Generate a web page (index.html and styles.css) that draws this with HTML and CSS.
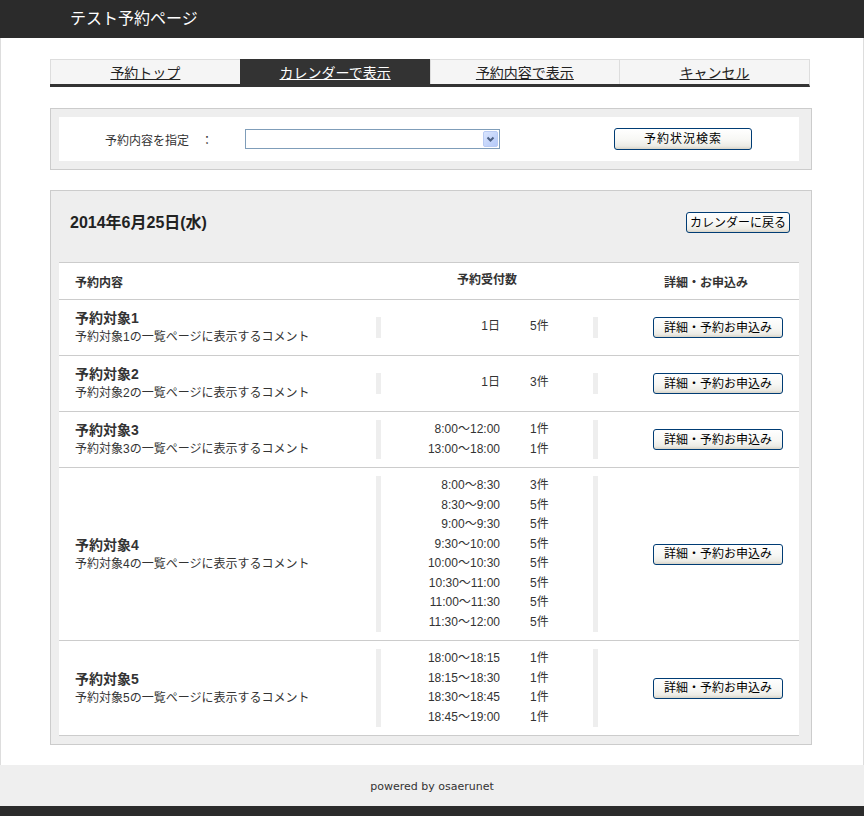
FILE: index.html
```html
<!DOCTYPE html>
<html lang="ja">
<head>
<meta charset="utf-8">
<title>テスト予約ページ</title>
<link rel="stylesheet" href="styles.css">
</head>
<body>
<header class="site-header"><h1 class="site-title">テスト予約ページ</h1></header>
<div class="page">
  <nav class="tabs">
    <a class="tab" href="#">予約トップ</a>
    <a class="tab active" href="#">カレンダーで表示</a>
    <a class="tab" href="#">予約内容で表示</a>
    <a class="tab" href="#">キャンセル</a>
  </nav>

  <section class="box search">
    <div class="search-inner">
      <label class="search-label">予約内容を指定　：</label>
      <span class="select-wrap">
        <select class="select"><option></option></select>
        <span class="select-arrow"><svg width="15" height="16" viewBox="0 0 15 16"><defs><linearGradient id="ag" x1="0" y1="0" x2="1" y2="1"><stop offset="0" stop-color="#dbe6fe"/><stop offset="1" stop-color="#b3c8f8"/></linearGradient></defs><rect x="0.5" y="0.5" width="14" height="15" rx="1.5" fill="url(#ag)" stroke="#b9cbf3"/><path d="M4.5 6.5 L7.5 9.5 L10.5 6.5" fill="none" stroke="#4d6185" stroke-width="2"/></svg></span>
      </span>
      <button class="btn btn-search" type="button">予約状況検索</button>
    </div>
  </section>

  <section class="box result">
    <div class="result-head">
      <h2 class="result-title">2014年6月25日(水)</h2>
      <button class="btn btn-back" type="button">カレンダーに戻る</button>
    </div>
    <div class="table">
      <div class="row thead">
        <div class="c1">予約内容</div>
        <div class="group">
          <div class="c2 h2c">予約受付数</div>
          <div class="c3 h3c">詳細・お申込み</div>
        </div>
      </div>

      <div class="row">
        <div class="c1"><div class="item-title">予約対象1</div><div class="item-note">予約対象1の一覧ページに表示するコメント</div></div>
        <div class="group">
          <div class="c2"><div class="slot"><span class="time">1日</span><span>5件</span></div></div>
          <div class="c3"><button class="btn btn-apply" type="button">詳細・予約お申込み</button></div>
        </div>
      </div>

      <div class="row">
        <div class="c1"><div class="item-title">予約対象2</div><div class="item-note">予約対象2の一覧ページに表示するコメント</div></div>
        <div class="group">
          <div class="c2"><div class="slot"><span class="time">1日</span><span>3件</span></div></div>
          <div class="c3"><button class="btn btn-apply" type="button">詳細・予約お申込み</button></div>
        </div>
      </div>

      <div class="row">
        <div class="c1"><div class="item-title">予約対象3</div><div class="item-note">予約対象3の一覧ページに表示するコメント</div></div>
        <div class="group">
          <div class="c2">
            <div class="slot"><span class="time">8:00～12:00</span><span>1件</span></div>
            <div class="slot"><span class="time">13:00～18:00</span><span>1件</span></div>
          </div>
          <div class="c3"><button class="btn btn-apply" type="button">詳細・予約お申込み</button></div>
        </div>
      </div>

      <div class="row">
        <div class="c1"><div class="item-title">予約対象4</div><div class="item-note">予約対象4の一覧ページに表示するコメント</div></div>
        <div class="group">
          <div class="c2">
            <div class="slot"><span class="time">8:00～8:30</span><span>3件</span></div>
            <div class="slot"><span class="time">8:30～9:00</span><span>5件</span></div>
            <div class="slot"><span class="time">9:00～9:30</span><span>5件</span></div>
            <div class="slot"><span class="time">9:30～10:00</span><span>5件</span></div>
            <div class="slot"><span class="time">10:00～10:30</span><span>5件</span></div>
            <div class="slot"><span class="time">10:30～11:00</span><span>5件</span></div>
            <div class="slot"><span class="time">11:00～11:30</span><span>5件</span></div>
            <div class="slot"><span class="time">11:30～12:00</span><span>5件</span></div>
          </div>
          <div class="c3"><button class="btn btn-apply" type="button">詳細・予約お申込み</button></div>
        </div>
      </div>

      <div class="row">
        <div class="c1"><div class="item-title">予約対象5</div><div class="item-note">予約対象5の一覧ページに表示するコメント</div></div>
        <div class="group">
          <div class="c2">
            <div class="slot"><span class="time">18:00～18:15</span><span>1件</span></div>
            <div class="slot"><span class="time">18:15～18:30</span><span>1件</span></div>
            <div class="slot"><span class="time">18:30～18:45</span><span>1件</span></div>
            <div class="slot"><span class="time">18:45～19:00</span><span>1件</span></div>
          </div>
          <div class="c3"><button class="btn btn-apply" type="button">詳細・予約お申込み</button></div>
        </div>
      </div>
    </div>
  </section>
</div>
<footer class="site-footer">powered by osaerunet</footer>
<div class="site-bottom"></div>
</body>
</html>
```
FILE: styles.css
```css
* { box-sizing: border-box; }
html, body { margin: 0; padding: 0; }
body {
  font-family: "Liberation Sans", "Noto Sans CJK JP", sans-serif;
  font-size: 12px;
  color: #333;
  background: #fff;
  overflow: hidden;
}
.site-header {
  height: 38px;
  background: #2b2b2b;
  padding-left: 70px;
}
.site-title {
  margin: 0;
  font-size: 16px;
  font-weight: normal;
  color: #fff;
  line-height: 37px;
}
.page {
  border-left: 1px solid #ddd;
  border-right: 1px solid #ddd;
  padding: 21px 0 20px 49px;
}
.tabs {
  display: flex;
  width: 760px;
  border-bottom: 3px solid #333;
  border-right: 1px solid #ddd;
}
.tab {
  flex: 1;
  height: 25px;
  border-top: 1px solid #ddd;
  border-left: 1px solid #ddd;
  background: #f5f5f5;
  display: flex;
  align-items: center;
  justify-content: center;
  font-size: 14px;
  color: #222;
  text-decoration: underline;
}
.tab.active {
  background: #333;
  border-color: #333;
  color: #fff;
}
.box {
  width: 762px;
  border: 1px solid #ccc;
  background: #eee;
  padding: 8px;
}
.search { margin-top: 21px; }
.search-inner {
  width: 740px;
  height: 44px;
  background: #fff;
  display: flex;
  align-items: center;
  padding-left: 46px;
}
.search-label {
  width: 140px;
  color: #333;
}
.select-wrap {
  position: relative;
  width: 255px;
  height: 20px;
}
.select {
  display: block;
  width: 100%;
  height: 100%;
  appearance: none;
  -webkit-appearance: none;
  border: 1px solid #7f9db9;
  border-radius: 0;
  background: #fff;
  margin: 0;
}
.select-arrow {
  position: absolute;
  right: 2px;
  top: 2px;
  width: 15px;
  height: 16px;
  display: block;
}
.select-arrow svg { display: block; }
.btn {
  font-family: "Liberation Sans", "Noto Sans CJK JP", sans-serif;
  font-size: 12px;
  color: #000;
  border: 1px solid #003c74;
  border-radius: 3px;
  background: linear-gradient(#ffffff 0%, #f7f7f4 55%, #ecebe5 85%, #d8d4c8 100%);
  padding: 0;
  margin: 0;
  line-height: 1;
}
.btn-search {
  margin-left: 114px;
  width: 138px;
  height: 22px;
  letter-spacing: 1px;
}
.result { margin-top: 20px; }
.result-head {
  width: 740px;
  display: flex;
  justify-content: space-between;
  align-items: center;
  padding: 13px 9px 29px 11px;
}
.result-title {
  margin: 0;
  font-size: 16px;
  font-weight: bold;
  color: #222;
  line-height: 21px;
}
.btn-back {
  width: 104px;
  height: 21px;
}
.table {
  width: 740px;
  background: #fff;
  border-top: 1px solid #ccc;
}
.row {
  display: flex;
  align-items: center;
  border-bottom: 1px solid #ccc;
  padding: 8px 0;
}
.thead {
  height: 37px;
  padding: 0;
  font-weight: bold;
}
.c1 {
  width: 317px;
  padding-left: 16px;
}
.group { display: flex; }
.c2 {
  width: 217px;
  border-left: 5px solid #eee;
  line-height: 19.5px;
}
.c3 {
  width: 206px;
  border-left: 5px solid #eee;
  display: flex;
  align-items: center;
  justify-content: flex-end;
  padding-right: 16px;
}
.h2c {
  border-left-color: transparent;
  text-align: center;
}
.h3c {
  border-left-color: transparent;
  justify-content: center;
  padding-right: 0;
  padding-left: 15px;
}
.item-title {
  font-size: 14px;
  font-weight: bold;
  line-height: 20px;
  color: #333;
}
.item-note {
  font-size: 12px;
  line-height: 19px;
}
.slot {
  display: grid;
  grid-template-columns: 119px auto;
  column-gap: 30px;
}
.time { text-align: right; }
.btn-apply {
  width: 130px;
  height: 21px;
}
.site-footer {
  height: 41px;
  background: #efefef;
  text-align: center;
  font-family: "DejaVu Sans", sans-serif;
  font-size: 11px;
  line-height: 43px;
  color: #333;
}
.site-bottom {
  height: 10px;
  background: #2b2b2b;
}
```
